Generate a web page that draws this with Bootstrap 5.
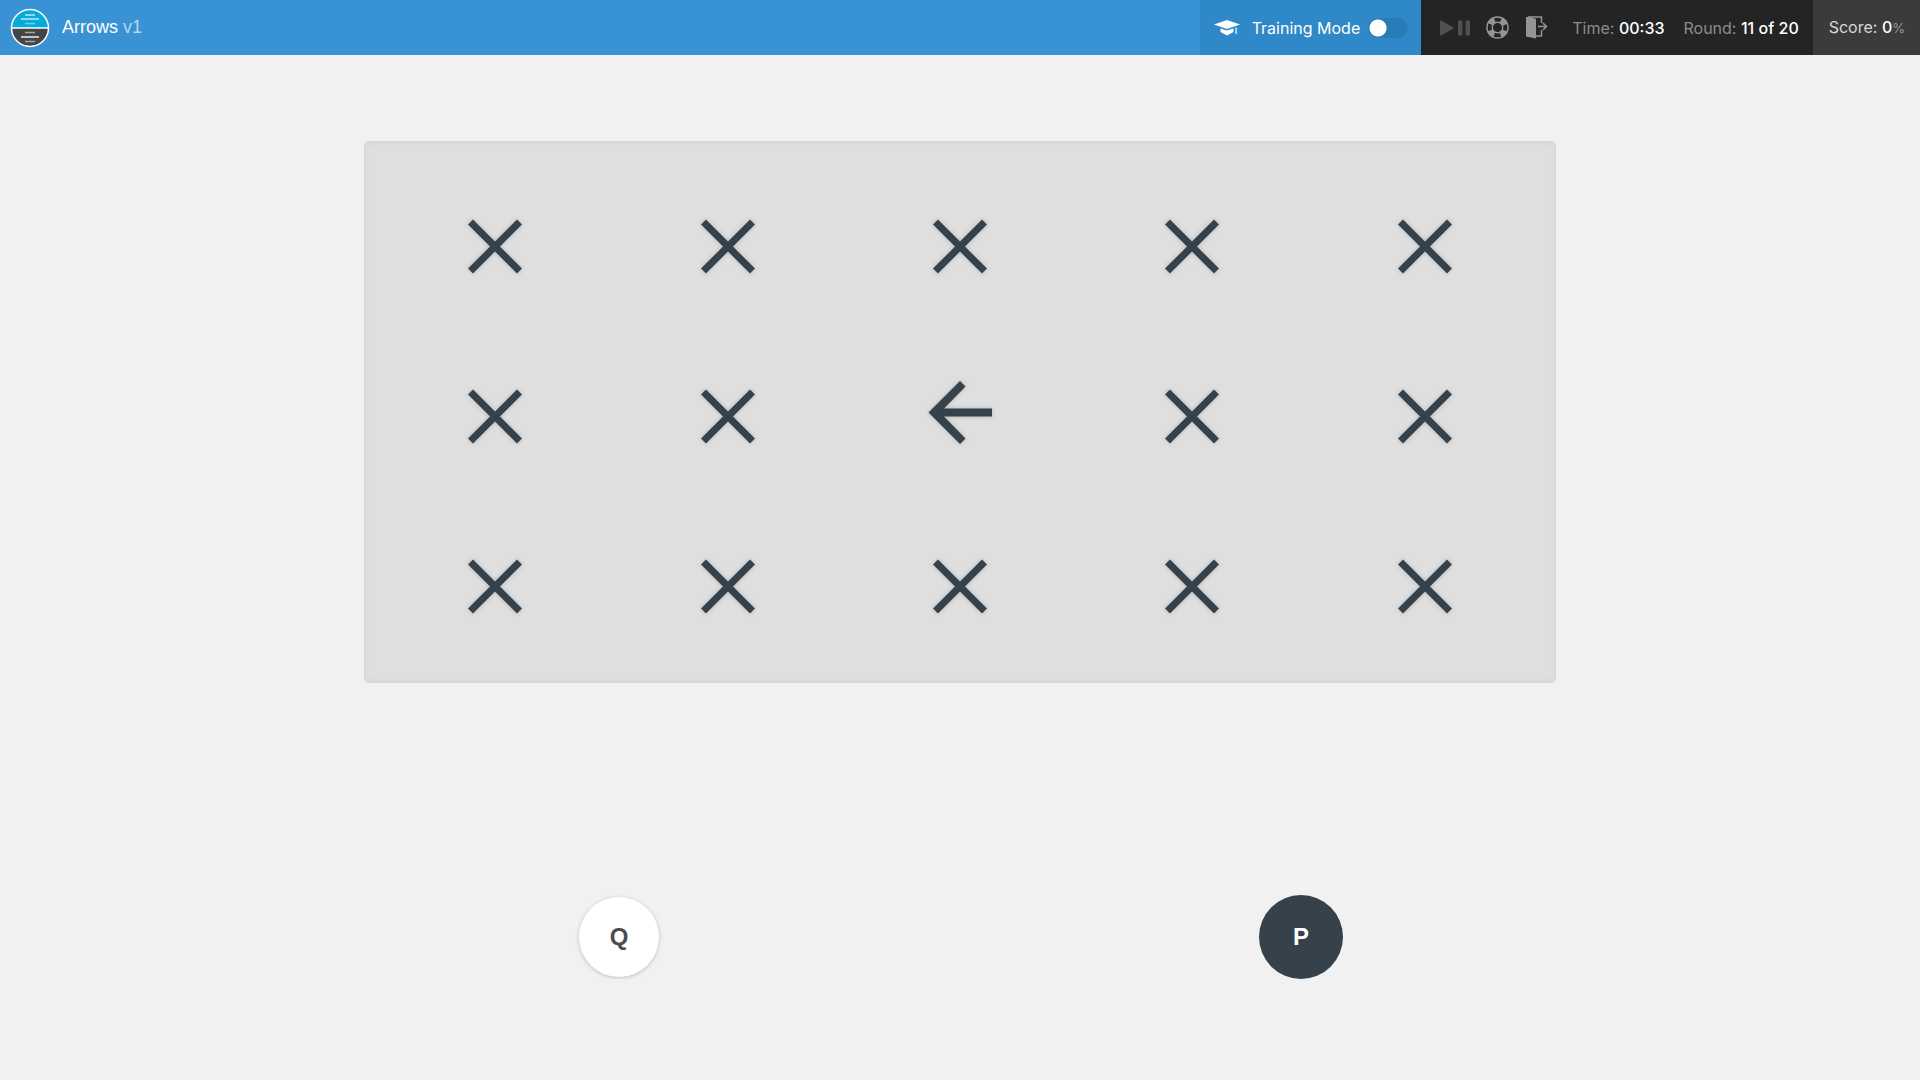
<!DOCTYPE html>
<html lang="en">
<head>
<meta charset="utf-8">
<meta name="viewport" content="width=device-width, initial-scale=1">
<title>Arrows v1</title>
<link rel="stylesheet" href="https://cdn.jsdelivr.net/npm/bootstrap@5.3.0/dist/css/bootstrap.min.css">
<style>
  body { background: #f1f1f1; font-family: Inter, sans-serif; font-size: 16px; line-height: 24px; }
  .topbar { background: #3892d3; min-height: 55px; }
  .game-title { font-family: "Liberation Sans", Arial, sans-serif; font-size: 18px; color: #fff; }
  .game-title span { color: #b4d7f0; }
  .game-title div { padding: 0 0 2px 2px; }
  .training { background: #2f88c7; color: #fff; padding: 0 13px 0 14px; }
  .training .form-check-input {
    width: 40px; height: 20px; margin: 0; border: 0; background-color: #297db6;
    background-image: radial-gradient(circle 9px at 50% 50%, #fff 8px, transparent 9px);
    background-size: 20px 20px; background-position: left center; box-shadow: none;
  }
  .training .form-check-input:checked { background-position: right center; }
  .status { background: #242424; color: #8c8c8c; padding: 0 14px 0 18px; }
  .status .round { margin-left: 19px; }
  .status strong, .scorebox strong { color: #fff; font-weight: 500; }
  .scorebox { background: #3b3b3b; color: #d8d8d8; padding: 0 15px 0 16px; }
  .scorebox small { font-size: 13px; color: #9a9a9a; }
  .icon-btn { border: 0; padding: 0; background: none; color: #949494; display: flex; }
  .icon-btn:disabled { color: #505050; }
  .board {
    max-width: 1192px; margin-top: 86px; padding: 15px 14px; border: 1px solid #d4d4d4;
    border-radius: 5px; background: #dfdfdf; box-shadow: inset 0 0 6px rgba(0,0,0,.05);
  }
  .board .col { height: 170px; }
  .board svg { filter: drop-shadow(0 0 2px rgba(0,0,0,.2)); }
  .answers { max-width: 1364px; margin-top: 212px; }
  .answer-key {
    width: 80px; height: 80px; border: 0; border-radius: 50%; background: #fff; color: #4c4c4c;
    font-family: "Liberation Sans", Arial, sans-serif;
    font-size: 24px; font-weight: 700; box-shadow: 0 1px 4px rgba(0,0,0,.2);
  }
  .answer-key.pressed { width: 84px; height: 84px; background: #35424b; color: #fff; box-shadow: none; }
</style>
</head>
<body>
<svg class="d-none" aria-hidden="true">
  <symbol id="cross" viewBox="0 0 72 72"><path d="M11.500 16 60.500 65M60.500 16 11.500 65" fill="none" stroke="#35424b" stroke-width="7"/></symbol>
  <symbol id="arrow-left" viewBox="0 0 72 72"><path d="M4.500 36.500 36 5l5.500 5.500L20 32.500h48v8H20L41.500 62.500 36 68z" fill="#35424b"/></symbol>
</svg>

<header class="topbar d-flex align-items-stretch">
  <a href="#" class="d-flex align-items-center text-decoration-none me-auto game-title ps-2">
    <svg class="me-2" width="44" height="44" viewBox="0 0 44 44" aria-hidden="true">
      <path d="M4 22a18 18 0 0 1 36 0z" fill="#06acd9"/>
      <path d="M4 22a18 18 0 0 0 36 0z" fill="#454545"/>
      <path d="M3 22h38" stroke="#fff" stroke-width="1.500"/>
      <circle cx="22" cy="22" r="18.500" fill="none" stroke="#fff" stroke-width="1.500"/>
      <path d="M17 9h10M13 13h18" stroke="#b9eafa" stroke-width="1.500"/>
      <path d="M17 17.500h10" stroke="#71cee8" stroke-width="1.500"/>
      <path d="M17 26.500h10M17 35.500h10" stroke="#a5a5a5" stroke-width="1.500"/>
      <path d="M13 31h18" stroke="#f0f0f0" stroke-width="1.500"/>
    </svg>
    <div>Arrows <span>v1</span></div>
  </a>
  <div class="training d-flex align-items-center">
    <svg width="26" height="16" viewBox="0 0 26 16" fill="#fff" aria-hidden="true">
      <path d="M0 4.500 13 0l13 4.500L13 9z"/>
      <path d="M6.500 8.500 13 10.500l6.500-2v3.500L13 15.500 6.500 12z"/>
      <path d="M21.500 7.500h1.200V14h-1.200z"/>
    </svg>
    <label class="ms-2 ps-1" for="training-mode">Training Mode</label>
    <div class="ms-2 d-flex"><input class="form-check-input rounded-pill" type="checkbox" role="switch" id="training-mode"></div>
  </div>
  <div class="status d-flex align-items-center">
    <button class="icon-btn" type="button" disabled aria-label="Play or pause">
      <svg width="31" height="16" viewBox="0 0 31 16" fill="currentColor"><path d="M2 .5 14.500 7.500v1L2 15.500H1V.5z"/><rect x="19" y=".5" width="4.500" height="15" rx="1"/><rect x="26.500" y=".5" width="4.500" height="15" rx="1"/></svg>
    </button>
    <button class="icon-btn ms-3" type="button" aria-label="Help">
      <svg width="23" height="23" viewBox="0 0 24 24" fill="none" stroke="currentColor"><circle cx="12" cy="12" r="11" stroke-width="1.500"/><circle cx="12" cy="12" r="5.500" stroke-width="1.500"/><circle cx="12" cy="12" r="8.500" stroke-width="6" stroke-dasharray="6.680" stroke-dashoffset="-3.340"/></svg>
    </button>
    <button class="icon-btn ms-3" type="button" aria-label="Exit">
      <svg width="23" height="23" viewBox="0 0 23 23"><path d="M1 1h4l6 2v19.500L1 20.500z" fill="currentColor"/><path d="M3 1h13.500v6M16.500 14v6H11M13 10.500h8M18 7l3.500 3.500L18 14" fill="none" stroke="currentColor" stroke-width="1.500"/></svg>
    </button>
    <div class="ms-4">Time: <strong>00:33</strong></div>
    <div class="round">Round: <strong>11 of 20</strong></div>
  </div>
  <div class="scorebox d-flex align-items-center"><div>Score: <strong>0</strong><small>%</small></div></div>
</header>

<main class="container-fluid">
  <section class="board mx-auto" aria-label="Board">
    <div class="row row-cols-5 g-0" id="board-cells"></div>
  </section>
  <div class="answers row g-0 mx-auto align-items-center text-center">
    <div class="col"><button class="answer-key" type="button">Q</button></div>
    <div class="col"><button class="answer-key pressed" type="button">P</button></div>
  </div>
</main>

<script src="https://cdn.jsdelivr.net/npm/bootstrap@5.3.0/dist/js/bootstrap.bundle.min.js"></script>
<script>
  const cells = document.getElementById('board-cells');
  for (let i = 0; i < 15; i++) {
    const shape = i === 7 ? 'arrow-left' : 'cross';
    cells.insertAdjacentHTML('beforeend',
      `<div class="col d-flex align-items-center justify-content-center"><svg width="72" height="72"><use href="#${shape}"/></svg></div>`);
  }
</script>
</body>
</html>
